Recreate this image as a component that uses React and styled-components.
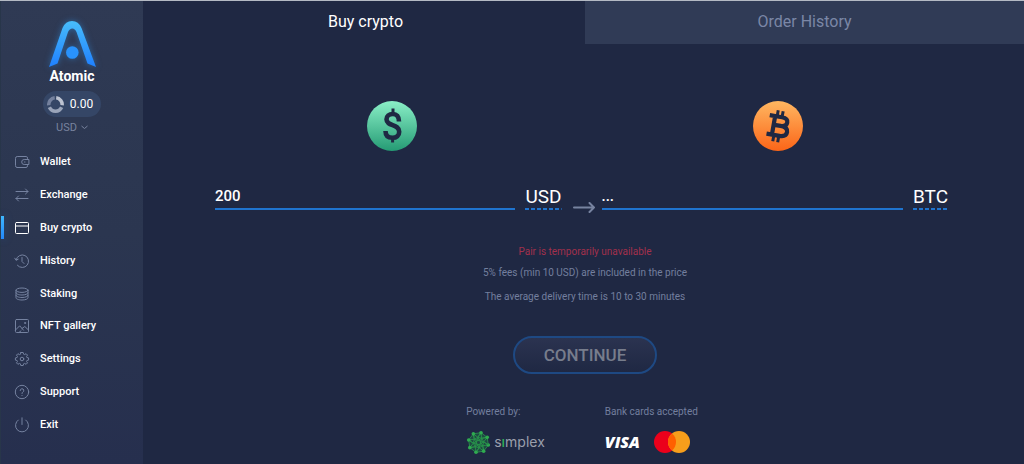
import React from "react";
import styled, { createGlobalStyle, css } from "styled-components";

const GlobalStyle = createGlobalStyle`
  *, *::before, *::after { box-sizing: border-box; }
  body {
    margin: 0;
    background: #1f2843;
    color: #fff;
    font-family: Roboto, "Liberation Sans", sans-serif;
  }
  button, input, select { font: inherit; color: inherit; }
`;

const Shell = styled.div`
  display: flex;
  min-height: 100vh;
  border-top: 1px solid #b4bac4;
`;

const Sidebar = styled.aside`
  display: flex;
  flex-direction: column;
  align-items: center;
  flex: 0 0 143px;
  padding: 16px 0 23px;
  border-left: 1px solid #28364a;
  background: linear-gradient(#2f3a54, #2b3650 50%, #262f4e);
`;

const Brand = styled.div`
  display: flex;
  flex-direction: column;
  align-items: center;
  font-size: 14px;
  line-height: 18px;
  font-weight: 700;

  svg { filter: drop-shadow(0 0 3px #2f8de088); }
`;

const Balance = styled.div`
  display: flex;
  align-items: center;
  gap: 6px;
  height: 26px;
  margin-top: 6px;
  padding: 0 8px 0 4px;
  border-radius: 13px;
  background: #354666;
  font-size: 12px;
`;

const CurrencyPicker = styled.label`
  display: flex;
  align-items: center;
  gap: 4px;
  height: 16px;
  margin-top: 2px;
  color: #78839f;
  font-size: 11px;

  select {
    appearance: none;
    padding: 0;
    border: 0;
    background: none;
  }
`;

const Nav = styled.nav`
  display: flex;
  flex: 1;
  flex-direction: column;
  align-self: stretch;
  margin-top: 11px;
`;

const NavLink = styled.a`
  position: relative;
  display: flex;
  flex: 1;
  align-items: center;
  gap: 10px;
  padding-left: 13px;
  color: #fff;
  font-size: 11px;
  font-weight: 500;
  line-height: 16px;
  text-decoration: none;

  svg { color: #7582a0; }

  ${({ $active }) =>
    $active &&
    css`
      svg { color: #fff; }
      &::before {
        content: "";
        position: absolute;
        left: 0;
        width: 3px;
        height: 23px;
        background: linear-gradient(#3fb8ff, #2388fb);
        box-shadow: 0 0 9px #2677d066;
      }
    `}
`;

const Main = styled.main`
  display: flex;
  flex: 1;
  flex-direction: column;
  min-width: 0;
  padding-left: 3px;
`;

const Tabs = styled.div`
  display: flex;
`;

const Tab = styled.button`
  flex: 1;
  height: 43px;
  padding: 0 0 3px;
  border: 0;
  background: ${({ $active }) => ($active ? "transparent" : "#303b56")};
  color: ${({ $active }) => ($active ? "#fff" : "#7b87a6")};
  font-size: 16px;
`;

const Coins = styled.div`
  display: flex;
  justify-content: space-around;
  padding: 57px 53px 0;
`;

const Form = styled.form`
  display: flex;
  flex-direction: column;
`;

const Exchange = styled.div`
  display: flex;
  align-items: flex-end;
  margin-top: 34px;
  padding: 0 76px 0 69px;
`;

const Side = styled.div`
  display: flex;
  flex: 1;
  align-items: flex-end;
  gap: 10px;
`;

const Amount = styled.input`
  flex: 1;
  min-width: 0;
  height: 25px;
  padding: 0 0 2px;
  border: 0;
  border-bottom: 2px solid #1f74cf;
  border-radius: 0;
  background: none;
  outline: none;
  font-size: 15px;
  font-weight: 500;
`;

const Ticker = styled.button`
  height: 25px;
  padding: 0 0 2px;
  border: 0;
  background: repeating-linear-gradient(90deg, #1f74cf 0 4px, transparent 4px 6px) bottom / 100% 2px no-repeat;
  font-size: 19px;
  line-height: 22px;
`;

const Arrow = styled.svg`
  flex: none;
  margin: 0 7px -3px 11px;
`;

const Notes = styled.div`
  display: flex;
  flex-direction: column;
  align-items: center;
  padding-top: 34px;
  color: #737f9e;
  font-size: 10px;
  line-height: 16px;

  p { margin: 0 0 8px; }
`;

const Warning = styled.p`
  && { margin: 0 0 5px; }
  color: #a2304c;
`;

const Continue = styled.button`
  align-self: center;
  width: 144px;
  height: 38px;
  margin-top: 23px;
  padding: 0;
  border: 2px solid #1e4983;
  border-radius: 19px;
  background: linear-gradient(#2b3350, #1f2843);
  color: #777d8c;
  font-size: 17px;
  font-weight: 500;
`;

const Partners = styled.footer`
  display: flex;
  justify-content: center;
  gap: 60px;
  padding: 30px 6px 8px 0;
  color: #737f9e;
  font-size: 10px;
  line-height: 16px;
`;

const Logos = styled.div`
  display: flex;
  align-items: center;
  gap: ${({ $gap }) => $gap}px;
  height: 26px;
  margin-top: 9px;
`;

const Simplex = styled.span`
  color: #9a9fac;
  font-family: Inter, sans-serif;
  font-size: 14px;
  font-weight: 400;
  line-height: 20px;

  b { color: #2fae57; font-weight: 500; }
`;

const Visa = styled.span`
  color: #fff;
  font-family: "Open Sans", sans-serif;
  font-size: 16px;
  font-style: italic;
  font-weight: 800;
  line-height: 20px;
`;

const Icon = ({ children }) => (
  <svg width="16" height="16" viewBox="0 0 16 16" fill="none" stroke="currentColor" strokeLinecap="round" strokeLinejoin="round" aria-hidden="true">
    {children}
  </svg>
);

const icons = {
  wallet: (
    <>
      <path d="M13.500 5V4.200Q13.500 2.500 12.300 2.500H3.200Q1.500 2.500 1.500 4.500V11.500Q1.500 13.500 3 13.500H12Q13.500 13.500 13.500 11.700V10.700" />
      <path d="M14.500 5.500H10.200a2.500 2.500 0 0 0 0 5H14.500Z" />
      <path d="M10.500 8h.5" />
    </>
  ),
  exchange: <path d="M2 4.500H14M11.500 2 14 4.500 11.500 7M14 11.500H2M4.500 9 2 11.500 4.500 14" />,
  card: (
    <>
      <rect x="1.500" y="2.500" width="13" height="11" rx="1" />
      <path d="M1.500 6H14.500" />
    </>
  ),
  history: (
    <>
      <path d="M2.100 6.700A6.300 6.300 0 1 1 3.400 12.300M.8 5.200 2.100 7.300 4.200 6.200" />
      <path d="M8 4.500V8.500L10 10.500" />
    </>
  ),
  staking: (
    <>
      <ellipse cx="8" cy="4.200" rx="6" ry="2.200" />
      <path d="M2 4.200V11.800C2 13 4.700 14 8 14S14 13 14 11.800V4.200M2 6.700C2 8 4.700 9 8 9S14 8 14 6.700M2 9.300C2 10.500 4.700 11.500 8 11.500S14 10.500 14 9.300" />
    </>
  ),
  gallery: (
    <>
      <rect x="1.500" y="1.500" width="13" height="13" rx="1" />
      <path d="M1.500 12 5.700 7.800 9.500 12.200M8 10.500 10.800 8.500 14.500 12M5.200 14.300 7 12.800" />
      <circle cx="11" cy="5" r=".6" />
    </>
  ),
  settings: (
    <>
      <path d="M6.800 1.500H9.200L9.600 3.200 10.600 3.600 12.100 2.700 13.500 4.100 12.500 5.600 12.900 6.500 14.600 6.900V9.100L12.900 9.500 12.500 10.400 13.500 11.900 12.100 13.300 10.600 12.400 9.600 12.800 9.200 14.500H6.800L6.400 12.800 5.400 12.400 3.900 13.300 2.500 11.900 3.500 10.400 3.100 9.500 1.400 9.100V6.900L3.100 6.500 3.500 5.600 2.500 4.100 3.900 2.700 5.400 3.600 6.400 3.200Z" />
      <circle cx="8" cy="8" r="1.800" />
    </>
  ),
  support: (
    <>
      <circle cx="8" cy="8" r="6.700" />
      <path d="M6.200 6.500a1.800 1.800 0 1 1 2.500 1.700Q8 8.500 8 9.500M8 11.500v.1" />
    </>
  ),
  exit: <path d="M8 .8V7.500M4.300 3A6.500 6.500 0 1 0 11.700 3" />,
};

const links = [
  ["wallet", "Wallet"],
  ["exchange", "Exchange"],
  ["card", "Buy crypto"],
  ["history", "History"],
  ["staking", "Staking"],
  ["gallery", "NFT gallery"],
  ["settings", "Settings"],
  ["support", "Support"],
  ["exit", "Exit"],
];

const AtomicLogo = () => (
  <svg width="50" height="50" viewBox="0 0 50 50" aria-hidden="true">
    <defs>
      <linearGradient id="atomic" x1="0" y1="0" x2="0" y2="1">
        <stop offset="0" stopColor="#48bdfb" />
        <stop offset="1" stopColor="#1f80ff" />
      </linearGradient>
    </defs>
    <path fill="url(#atomic)" d="M2 50 15.500 11Q18.500 4 25 4T34.500 11L49 50 40.500 46.500 29.500 15Q28 11.500 25.300 11.500T21 15L10.500 46.500Z" />
    <circle cx="25.300" cy="35.500" r="6.300" fill="#2992fc" />
  </svg>
);

const DollarCoin = () => (
  <svg width="50" height="50" viewBox="0 0 50 50" aria-hidden="true">
    <defs>
      <linearGradient id="green" x1="0" y1="0" x2="0" y2="1">
        <stop offset="0" stopColor="#8aefc7" />
        <stop offset="1" stopColor="#259b74" />
      </linearGradient>
    </defs>
    <circle cx="25" cy="25" r="25" fill="url(#green)" />
    <path d="M32 20.500C32 15.500 29.500 13 25.800 13 22 13 19.500 15.200 19.500 18.300 19.500 25.500 32.200 22.800 32.200 30.700 32.200 34.500 29.500 36.800 25.500 36.800 21.200 36.800 18.500 34.500 18.500 30" fill="none" stroke="#1f2843" strokeWidth="4.600" />
    <path d="M26 7.500V13M25.600 37V41.500" stroke="#1f2843" strokeWidth="3" />
  </svg>
);

const BitcoinCoin = () => (
  <svg width="50" height="50" viewBox="0 0 50 50" aria-hidden="true">
    <defs>
      <linearGradient id="orange" x1="0" y1="0" x2="0" y2="1">
        <stop offset="0" stopColor="#ffb761" />
        <stop offset="1" stopColor="#fb6518" />
      </linearGradient>
    </defs>
    <circle cx="25" cy="25" r="25" fill="url(#orange)" />
    <g transform="rotate(10 25 25)" fill="none" stroke="#1f2843">
      <path strokeWidth="4.200" strokeLinejoin="round" d="M20.500 16.300V34.500M15 15.700H27.500Q33.500 15.700 33.500 20T27.500 24.500H21M27.500 24.500Q35 24.500 35 29.500T28 34.500H15" />
      <path strokeWidth="3" d="M22.500 9.500V15M27.500 9.500V15M22.500 36V41M27.500 36V41" />
    </g>
  </svg>
);

const ring = Array.from({ length: 8 }, (_, i) => {
  const a = (i * Math.PI) / 4 + 0.25;
  return [13 + 10.5 * Math.cos(a), 13 + 10.5 * Math.sin(a), 13 + 5.5 * Math.cos(a + 0.4), 13 + 5.5 * Math.sin(a + 0.4)];
});

const SimplexMark = () => (
  <svg width="25" height="25" viewBox="0 0 26 26" fill="none" stroke="#27944a" strokeWidth=".9" aria-hidden="true">
    <circle cx="13" cy="13" r="9.500" fill="#1f4a43" stroke="none" />
    {ring.map(([x, y, u, v], i) => {
      const next = ring[(i + 1) % 8];
      const prev = ring[(i + 7) % 8];
      return (
        <React.Fragment key={i}>
          <path d={`M${u} ${v}L${x} ${y}L${next[0]} ${next[1]}L${u} ${v}L${next[2]} ${next[3]}M${x} ${y}L${prev[2]} ${prev[3]}M${u} ${v}L${ring[(i + 3) % 8][2]} ${ring[(i + 3) % 8][3]}`} />
          <circle cx={x} cy={y} r="1.900" fill="#2fab50" stroke="none" />
        </React.Fragment>
      );
    })}
  </svg>
);

export default function App() {
  return (
    <>
      <GlobalStyle />
      <Shell>
        <Sidebar>
          <Brand>
            <AtomicLogo />
            Atomic
          </Brand>
          <Balance>
            <svg width="17" height="17" viewBox="0 0 17 17" fill="none" strokeWidth="3.500" aria-hidden="true">
              <path d="M9.200 1.800A6.700 6.700 0 0 1 15.100 9.300" stroke="#bdc3d1" />
              <path d="M14.600 11.200A6.700 6.700 0 0 1 2.400 11.200" stroke="#9aa4b9" />
              <path d="M1.800 9.300A6.700 6.700 0 0 1 7.700 1.800" stroke="#75819e" />
            </svg>
            0.00
          </Balance>
          <CurrencyPicker>
            <select aria-label="Display currency" defaultValue="USD">
              <option>USD</option>
            </select>
            <svg width="7" height="5" viewBox="0 0 7 5" fill="none" stroke="currentColor" aria-hidden="true">
              <path d="M.5 1 3.500 3.500 6.500 1" />
            </svg>
          </CurrencyPicker>
          <Nav>
            {links.map(([icon, label]) => (
              <NavLink key={icon} href={`#${icon}`} $active={icon === "card"}>
                <Icon>{icons[icon]}</Icon>
                {label}
              </NavLink>
            ))}
          </Nav>
        </Sidebar>
        <Main>
          <Tabs role="tablist">
            <Tab role="tab" aria-selected="true" $active>Buy crypto</Tab>
            <Tab role="tab" aria-selected="false">Order History</Tab>
          </Tabs>
          <Coins>
            <DollarCoin />
            <BitcoinCoin />
          </Coins>
          <Form onSubmit={(e) => e.preventDefault()}>
            <Exchange>
              <Side>
                <Amount aria-label="Amount to pay" defaultValue="200" />
                <Ticker type="button">USD</Ticker>
              </Side>
              <Arrow width="22" height="11" viewBox="0 0 22 11" fill="none" stroke="#7783a0" strokeWidth="2" strokeLinecap="round" strokeLinejoin="round" aria-hidden="true">
                <path d="M1 5.500H21M16.500 1 21 5.500 16.500 10" />
              </Arrow>
              <Side>
                <Amount aria-label="Amount to receive" defaultValue="..." />
                <Ticker type="button">BTC</Ticker>
              </Side>
            </Exchange>
            <Notes>
              <Warning>Pair is temporarily unavailable</Warning>
              <p>5% fees (min 10 USD) are included in the price</p>
              <p>The average delivery time is 10 to 30 minutes</p>
            </Notes>
            <Continue type="submit">CONTINUE</Continue>
          </Form>
          <Partners>
            <div>
              Powered by:
              <Logos $gap={3}>
                <SimplexMark />
                <Simplex>s<b>ı</b>mplex</Simplex>
              </Logos>
            </div>
            <div>
              Bank cards accepted
              <Logos $gap={14}>
                <Visa>VISA</Visa>
                <svg width="36" height="22" viewBox="0 0 36 22" role="img" aria-label="Mastercard">
                  <circle cx="11" cy="11" r="11" fill="#eb001b" />
                  <circle cx="25" cy="11" r="11" fill="#f79e1b" />
                  <path d="M18 2.500a11 11 0 0 1 0 17 11 11 0 0 1 0-17" fill="#ff5f00" />
                </svg>
              </Logos>
            </div>
          </Partners>
        </Main>
      </Shell>
    </>
  );
}
